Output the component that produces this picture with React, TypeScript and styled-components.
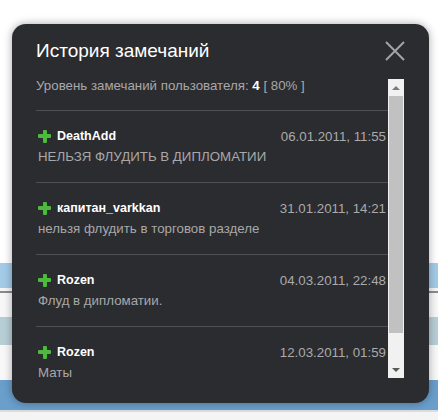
import React from "react";
import styled, { createGlobalStyle } from "styled-components";

type Remark = {
  user: string;
  date: string;
  text: string;
};

const remarks: Remark[] = [
  { user: "DeathAdd", date: "06.01.2011, 11:55", text: "НЕЛЬЗЯ ФЛУДИТЬ В ДИПЛОМАТИИ" },
  { user: "капитан_varkkan", date: "31.01.2011, 14:21", text: "нельзя флудить в торговов разделе" },
  { user: "Rozen", date: "04.03.2011, 22:48", text: "Флуд в дипломатии." },
  { user: "Rozen", date: "12.03.2011, 01:59", text: "Маты" },
];

const GlobalStyle = createGlobalStyle`
  html, body {
    margin: 0;
    padding: 0;
    background: #ffffff;
    font-family: "Liberation Sans", Arial, sans-serif;
  }
`;

const App = () => {
  return (
    <Root>
      <GlobalStyle />
      <Page>
        <Band $h={263} $bg="#ffffff" />
        <Band $h={25} $bg="#a3cbe8" />
        <Band $h={3} $bg="#f6f6f6" />
        <Band $h={2} $bg="#8a8a8a" />
        <Band $h={24} $bg="#f7f7f7" />
        <Band $h={28} $bg="#b8ced7" />
        <Band $h={35} $bg="#f8f8f8" />
        <Band $h={30} $bg="#6a9ecb" />
        <Band $h={2} $bg="#dcdcdc" />
        <Band $h={8} $bg="#f4f4f4" />
      </Page>

      <Modal>
        <Header>
          <Title>История замечаний</Title>
          <CloseButton aria-label="close">
            <svg width="20" height="20" viewBox="0 0 20 20">
              <path d="M1 1 L19 19 M19 1 L1 19" stroke="#a3a3a3" strokeWidth="2" fill="none" />
            </svg>
          </CloseButton>
        </Header>

        <Body>
          <List>
            <Level>
              Уровень замечаний пользователя: <b>4</b> [ 80% ]
            </Level>
            {remarks.map((item, index) => (
              <Entry key={index}>
                <EntryHead>
                  <User>
                    <Plus />
                    {item.user}
                  </User>
                  <DateText>{item.date}</DateText>
                </EntryHead>
                <Message>{item.text}</Message>
              </Entry>
            ))}
          </List>
          <ScrollBar>
            <Arrow $up />
            <Track>
              <Thumb />
            </Track>
            <Arrow />
          </ScrollBar>
        </Body>
      </Modal>
    </Root>
  );
};

export default App;

const Root = styled.div`
  position: relative;
  width: 438px;
  height: 420px;
  overflow: hidden;
`;

const Page = styled.div`
  display: flex;
  flex-direction: column;
`;

const Band = styled.div<{ $h: number; $bg: string }>`
  height: ${p => p.$h}px;
  background: ${p => p.$bg};
`;

const Modal = styled.div`
  position: absolute;
  left: 12px;
  top: 24px;
  width: 417px;
  height: 379px;
  box-sizing: border-box;
  padding: 14px 25px 25px 24px;
  background: #2b2c30;
  border-radius: 14px;
  box-shadow: 0 0 9px rgba(0, 0, 0, 0.35);
  display: flex;
  flex-direction: column;
`;

const Header = styled.div`
  display: flex;
  justify-content: space-between;
  align-items: center;
  height: 26px;
  margin-bottom: 15px;
`;

const Title = styled.div`
  font-size: 19px;
  line-height: 26px;
  color: #ffffff;
`;

const CloseButton = styled.div`
  width: 20px;
  height: 20px;
  display: flex;
  margin-right: -1px;
  cursor: pointer;
`;

const Body = styled.div`
  display: flex;
  flex-direction: row;
  height: 299px;
`;

const List = styled.div`
  flex: 1;
  overflow: hidden;
`;

const Level = styled.div`
  height: 14px;
  font-size: 13.3px;
  line-height: 14px;
  color: #a8a8a8;
  margin-bottom: 17px;
  white-space: nowrap;
  b {
    color: #ffffff;
  }
`;

const Entry = styled.div`
  border-top: 1px solid #505156;
  padding: 16px 2px 17px 2px;
`;

const EntryHead = styled.div`
  display: flex;
  justify-content: space-between;
  align-items: center;
  height: 18px;
  margin-bottom: 3px;
`;

const User = styled.div`
  display: flex;
  align-items: center;
  gap: 6px;
  font-size: 12.5px;
  font-weight: bold;
  color: #ffffff;
`;

const Plus = styled.span`
  position: relative;
  width: 13px;
  height: 13px;
  &::before,
  &::after {
    content: "";
    position: absolute;
    background: #4cba3d;
    border-radius: 1px;
  }
  &::before {
    left: 0;
    top: 4.5px;
    width: 13px;
    height: 4px;
  }
  &::after {
    left: 4.5px;
    top: 0;
    width: 4px;
    height: 13px;
  }
`;

const DateText = styled.div`
  font-size: 13.3px;
  color: #aaaaaa;
`;

const Message = styled.div`
  height: 17px;
  font-size: 13.3px;
  line-height: 17px;
  color: #a8a8a8;
`;

const ScrollBar = styled.div`
  width: 16px;
  background: #f1f1f1;
  display: flex;
  flex-direction: column;
`;

const Arrow = styled.div<{ $up?: boolean }>`
  height: 17px;
  display: flex;
  align-items: center;
  justify-content: center;
  &::after {
    content: "";
    width: 0;
    height: 0;
    border-left: 4px solid transparent;
    border-right: 4px solid transparent;
    ${p =>
      p.$up
        ? "border-bottom: 4px solid #7a7a7a;"
        : "border-top: 4px solid #5a5a5a;"}
  }
`;

const Track = styled.div`
  flex: 1;
  padding: 0 1px;
`;

const Thumb = styled.div`
  height: 237px;
  background: #c1c1c1;
`;
